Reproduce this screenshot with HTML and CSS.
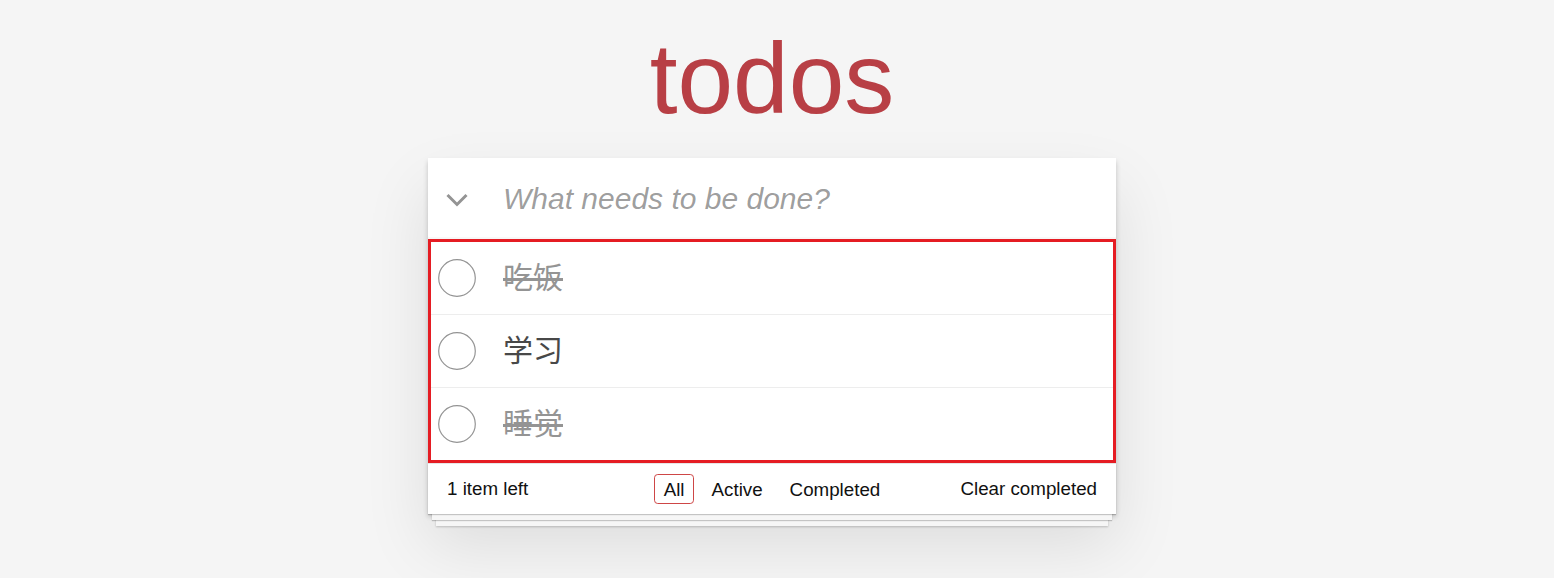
FILE: index.html
```html
<!DOCTYPE html>
<html lang="zh">
<head>
    <meta charset="UTF-8">
    <meta name="viewport" content="width=device-width, initial-scale=1.0">
    <title>todos</title>
    <link rel="stylesheet" href="styles.css">
</head>
<body>
    <div class="page">
        <h1 class="title">todos</h1>
        <section class="todoapp">
            <header class="header">
                <label class="toggle-all">
                    <svg width="22" height="14" viewBox="0 0 22 14">
                        <polyline points="1.5,2 11,11.5 20.5,2" fill="none" stroke="#949494" stroke-width="3"/>
                    </svg>
                </label>
                <input class="new-todo" placeholder="What needs to be done?">
            </header>
            <ul class="todo-list">
                <li class="completed">
                    <span class="toggle"><svg width="38" height="38" viewBox="0 0 38 38"><circle cx="19" cy="19" r="18.3" fill="none" stroke="#949494" stroke-width="1.2"/></svg></span>
                    <label>吃饭</label>
                </li>
                <li>
                    <span class="toggle"><svg width="38" height="38" viewBox="0 0 38 38"><circle cx="19" cy="19" r="18.3" fill="none" stroke="#949494" stroke-width="1.2"/></svg></span>
                    <label>学习</label>
                </li>
                <li class="completed">
                    <span class="toggle"><svg width="38" height="38" viewBox="0 0 38 38"><circle cx="19" cy="19" r="18.3" fill="none" stroke="#949494" stroke-width="1.2"/></svg></span>
                    <label>睡觉</label>
                </li>
            </ul>
            <footer class="footer">
                <span class="todo-count">1 item left</span>
                <ul class="filters"><li><a class="selected">All</a></li><li><a>Active</a></li><li><a>Completed</a></li></ul>
                <button class="clear-completed">Clear completed</button>
            </footer>
        </section>
    </div>
</body>
</html>
```

FILE: styles.css
```css
html {
    background: #f5f5f5;
}
body {
    margin: 0;
    padding: 0 10px 0 0;
    min-height: 578px;
    font-family: "Liberation Sans", Arial, "Noto Sans CJK SC", sans-serif;
    color: #111;
}
.page {
    width: 688px;
    margin: 0 auto;
    padding-bottom: 50px;
}
.title {
    margin: 28px 0 0;
    height: 100px;
    font-size: 100px;
    line-height: 100px;
    font-weight: normal;
    text-align: center;
    color: #b83f45;
}
.todoapp {
    margin-top: 30px;
    background: #fff;
    box-shadow: 0 2.5px 5px rgba(0, 0, 0, 0.2), 0 31px 62px rgba(0, 0, 0, 0.1);
}
.header {
    display: flex;
    align-items: center;
    height: 81px;
    box-shadow: inset 0 -2px 1px rgba(0, 0, 0, 0.03);
}
.toggle-all {
    width: 58px;
    display: flex;
    justify-content: center;
    padding-top: 2px;
}
.new-todo {
    flex: 1;
    height: 81px;
    border: none;
    outline: none;
    background: transparent;
    padding: 0 16px 0 17px;
    font-family: "Liberation Sans", Arial, sans-serif;
    font-size: 30px;
    color: #111;
}
.new-todo::placeholder {
    font-style: italic;
    color: rgba(0, 0, 0, 0.4);
}
.todo-list {
    margin: 0;
    padding: 0;
    list-style: none;
    border: 3px solid #e51c23;
}
.todo-list li {
    display: flex;
    align-items: center;
    height: 72px;
    border-bottom: 1px solid #ededed;
}
.todo-list li:last-child {
    border-bottom: none;
}
.toggle {
    display: flex;
    width: 38px;
    height: 38px;
    margin-left: 7px;
}
.todo-list label {
    margin-left: 27px;
    font-family: "Liberation Sans", "Noto Sans CJK SC", sans-serif;
    font-size: 30px;
    line-height: 36px;
    color: #484848;
}
.todo-list li.completed label {
    color: #949494;
    text-decoration: line-through;
}
.footer {
    position: relative;
    display: grid;
    grid-template-columns: 1fr auto 1fr;
    align-items: center;
    height: 50px;
    padding: 0 19px;
    font-size: 18.75px;
    border-top: 1px solid #e6e6e6;
}
.footer::before {
    content: '';
    position: absolute;
    left: 0;
    right: 0;
    bottom: 0;
    height: 50px;
    pointer-events: none;
    box-shadow: 0 1px 1px rgba(0, 0, 0, 0.2),
        0 10px 0 -4px #f6f6f6,
        0 11px 1px -4px rgba(0, 0, 0, 0.2),
        0 20px 0 -8px #f6f6f6,
        0 21px 2px -8px rgba(0, 0, 0, 0.2);
}
.filters {
    display: flex;
    margin: 0;
    padding: 0;
    list-style: none;
}
.filters a {
    display: block;
    margin: 0 3.75px;
    padding: 3.75px 8.75px;
    line-height: 21px;
    border: 1px solid transparent;
    border-radius: 3.75px;
    color: inherit;
}
.filters a.selected {
    border-color: #ce4646;
}
.clear-completed {
    justify-self: end;
    border: none;
    background: none;
    padding: 0;
    font: inherit;
    color: inherit;
}
```
